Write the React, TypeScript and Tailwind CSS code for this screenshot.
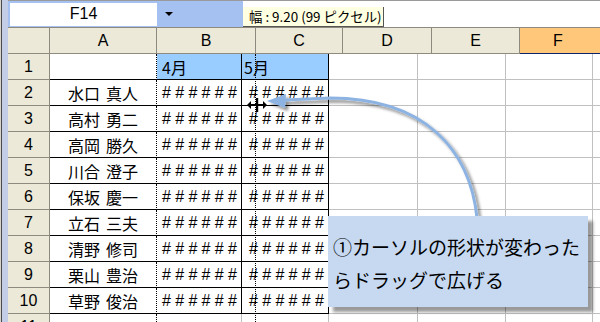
import React from "react";

const LAT = { fontFamily: '"Liberation Sans", Arial, sans-serif' };
const JP = { fontFamily: '"Noto Sans CJK JP", "Noto Sans", sans-serif' };

const names = [
  "",
  "水口 真人",
  "高村 勇二",
  "高岡 勝久",
  "川合 澄子",
  "保坂 慶一",
  "立石 三夫",
  "清野 修司",
  "栗山 豊治",
  "草野 俊治",
];

function Hash() {
  return (
    <span className="text-[16px] text-black tracking-[4.3px]" style={LAT}>
      ######
    </span>
  );
}

function Name({ v }: { v: string }) {
  if (!v) return null;
  const [a, b] = v.split(" ");
  return (
    <span className="flex gap-[6px] text-[16px] text-black" style={JP}>
      <span>{a}</span>
      <span>{b}</span>
    </span>
  );
}

export default function App() {
  const rowNums = Array.from({ length: 11 }, (_, i) => i + 1);
  return (
    <div className="relative w-[600px] h-[322px] overflow-hidden bg-white flex">
      {/* left window strip */}
      <div className="flex shrink-0 h-full">
        <div className="w-px bg-[#d6d3cc]" />
        <div className="w-px bg-[#4a4a4a]" />
        <div className="w-[6px] bg-[#c3cee6]" />
      </div>

      <div className="flex-1 flex flex-col min-w-0">
        {/* name box bar */}
        <div className="h-[27px] flex shrink-0 border-t border-[#9a9a9a]">
          <div className="w-[235px] bg-[#a5c1f2] flex items-center pl-[2px]">
            <div
              className="w-[147px] h-[23px] bg-white flex items-center justify-center text-[16px] text-black"
              style={LAT}
            >
              F14
            </div>
            <div className="ml-[8px] w-0 h-0 border-l-[4px] border-r-[4px] border-t-[4px] border-l-transparent border-r-transparent border-t-black" />
          </div>
          <div className="flex-1 bg-white" />
        </div>

        {/* column headers */}
        <div
          className="h-[27px] flex shrink-0 border-t border-[#8e8b7e] text-[16px] text-black"
          style={LAT}
        >
          <div className="w-[42px] bg-[#ece9d8] border-r border-b border-[#8e8b7e]" />
          <div className="w-[107px] bg-[#ece9d8] border-r border-b border-[#8e8b7e] flex items-center justify-center">A</div>
          <div className="w-[99px] bg-[#ece9d8] border-r border-b border-[#8e8b7e] flex items-center justify-center">B</div>
          <div className="w-[87px] bg-[#ece9d8] border-r border-b border-[#8e8b7e] flex items-center justify-center">C</div>
          <div className="w-[89px] bg-[#ece9d8] border-r border-b border-[#8e8b7e] flex items-center justify-center">D</div>
          <div className="w-[88px] bg-[#ece9d8] border-r border-b border-[#8e8b7e] flex items-center justify-center">E</div>
          <div className="flex-1 bg-[#ffc77a] border-b border-[#0a246a] flex items-center justify-center pr-[4px]">F</div>
        </div>

        {/* rows */}
        {rowNums.map((n) => {
          const inTable = n <= 10;
          const tb = inTable ? "border-black" : "border-[#c0c0c0]";
          return (
            <div key={n} className="h-[26px] flex shrink-0">
              <div
                className="w-[42px] shrink-0 bg-[#ece9d8] border-r border-b border-[#8e8b7e] flex items-center justify-center text-[16px] text-black"
                style={LAT}
              >
                {n}
              </div>
              <div
                className={`w-[107px] shrink-0 border-r border-b flex items-center justify-center ${tb}`}
                style={{ borderRightStyle: "dotted", borderRightColor: "#000" }}
              >
                {inTable && <Name v={names[n - 1]} />}
              </div>
              <div
                className={`w-[85px] shrink-0 border-r border-b flex items-center pl-[5px] ${tb} ${
                  n === 1 ? "bg-[#99ccff]" : ""
                }`}
              >
                {n === 1 ? (
                  <span className="text-[16px] text-black" style={JP}>
                    4月
                  </span>
                ) : inTable ? (
                  <Hash />
                ) : null}
              </div>
              <div
                className={`w-[87px] shrink-0 border-r border-b flex items-center ${tb} ${
                  n === 1 ? "bg-[#99ccff] pl-[2px]" : "pl-[7px]"
                }`}
              >
                {n === 1 ? (
                  <span className="text-[16px] text-black" style={JP}>
                    5月
                  </span>
                ) : inTable ? (
                  <Hash />
                ) : null}
              </div>
              <div className="w-[89px] shrink-0 border-r border-b border-[#c0c0c0]" />
              <div className="w-[88px] shrink-0 border-r border-b border-[#c0c0c0]" />
              <div className="w-[87px] shrink-0 border-r border-b border-[#c0c0c0]" />
              <div className="flex-1 border-b border-[#c0c0c0]" />
            </div>
          );
        })}
      </div>

      {/* tooltip */}
      <div
        className="absolute left-[243px] top-[7px] w-[141px] h-[20px] bg-[#ffffe1] border-r border-b border-[#555] flex items-center pl-[6px] text-[13.4px] text-black whitespace-nowrap"
        style={JP}
      >
        幅 : 9.20 (99 ピクセル)
      </div>

      {/* dotted drag line */}
      <div className="absolute left-[255px] top-[54px] h-[268px] border-l border-dotted border-black" />

      {/* arrow */}
      <svg className="absolute left-0 top-0 pointer-events-none" width="600" height="322">
        <defs>
          <filter id="sh" x="-20%" y="-20%" width="140%" height="140%">
            <feDropShadow dx="3" dy="3" stdDeviation="1.6" floodColor="#000" floodOpacity="0.45" />
          </filter>
        </defs>
        <g filter="url(#sh)">
          <path
            d="M 477 218 C 470 150, 425 98, 330 98 L 284 100"
            fill="none"
            stroke="#8db3e2"
            strokeWidth="3"
          />
          <polygon points="267,101 286,94 285,108" fill="#8db3e2" />
        </g>
      </svg>

      {/* resize cursor */}
      <svg className="absolute left-[246px] top-[96px] pointer-events-none" width="22" height="18" viewBox="0 0 22 18">
        <rect x="10" y="2" width="2.2" height="14" fill="#000" />
        <rect x="4" y="8" width="14" height="2" fill="#000" />
        <polygon points="1,9 5,5 5,13" fill="#000" />
        <polygon points="21,9 17,5 17,13" fill="#000" />
      </svg>

      {/* callout */}
      <div
        className="absolute left-[328px] top-[216px] w-[260px] h-[91px] bg-[#c6d9f1] shadow-[5px_5px_3px_rgba(0,0,0,0.4)] pl-[5px] pt-[14px] text-[19px] leading-[33px] text-black"
        style={JP}
      >
        <div>①カーソルの形状が変わった</div>
        <div>らドラッグで広げる</div>
      </div>
    </div>
  );
}
